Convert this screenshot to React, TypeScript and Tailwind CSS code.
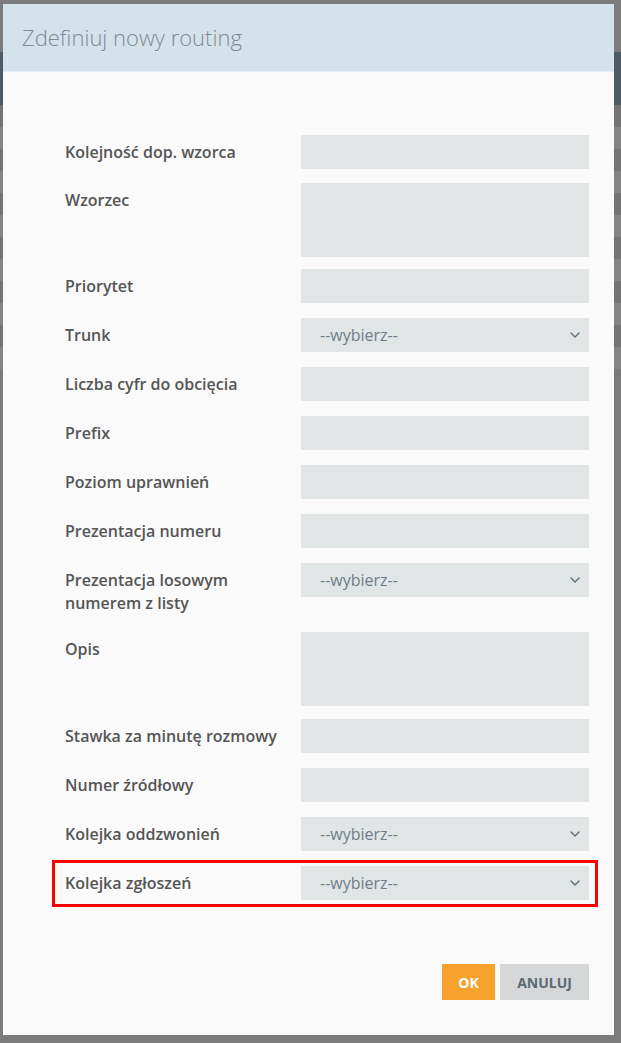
import { ChevronDown } from "lucide-react";

type Field = {
  label: string;
  kind: "input" | "textarea" | "select";
  mb: string;
};

const fields: Field[] = [
  { label: "Kolejność dop. wzorca", kind: "input", mb: "mb-[14px]" },
  { label: "Wzorzec", kind: "textarea", mb: "mb-[12px]" },
  { label: "Priorytet", kind: "input", mb: "mb-[15px]" },
  { label: "Trunk", kind: "select", mb: "mb-[15px]" },
  { label: "Liczba cyfr do obcięcia", kind: "input", mb: "mb-[15px]" },
  { label: "Prefix", kind: "input", mb: "mb-[15px]" },
  { label: "Poziom uprawnień", kind: "input", mb: "mb-[15px]" },
  { label: "Prezentacja numeru", kind: "input", mb: "mb-[15px]" },
  { label: "Prezentacja losowym numerem z listy", kind: "select", mb: "mb-[17px]" },
  { label: "Opis", kind: "textarea", mb: "mb-[13px]" },
  { label: "Stawka za minutę rozmowy", kind: "input", mb: "mb-[15px]" },
  { label: "Numer źródłowy", kind: "input", mb: "mb-[15px]" },
  { label: "Kolejka oddzwonień", kind: "select", mb: "mb-[9px]" },
];

function Control({ kind }: { kind: Field["kind"] }) {
  if (kind === "textarea") {
    return <div className="w-[288px] h-[74px] shrink-0 bg-[#e2e5e6]" />;
  }
  if (kind === "select") {
    return (
      <div className="w-[288px] h-[34px] shrink-0 bg-[#e2e5e6] flex items-center justify-between pl-[19px] pr-[6px] text-[16px] text-[#6f7e88]">
        <span>--wybierz--</span>
        <ChevronDown className="w-[16px] h-[16px] text-[#5f6e78]" strokeWidth={2} />
      </div>
    );
  }
  return <div className="w-[288px] h-[34px] shrink-0 bg-[#e2e5e6]" />;
}

function Label({ text }: { text: string }) {
  return (
    <label className="w-[236px] shrink-0 pt-[6px] pr-[6px] text-[16px] leading-[23px] font-semibold text-[#555555]">
      {text}
    </label>
  );
}

function Row({ field }: { field: Field }) {
  return (
    <div className={`flex items-start ${field.mb}`}>
      <Label text={field.label} />
      <Control kind={field.kind} />
    </div>
  );
}

export default function App() {
  return (
    <div
      className="relative h-[1043px] w-full overflow-hidden bg-[#7b7b7b]"
      style={{ fontFamily: '"Open Sans", "Liberation Sans", sans-serif' }}
    >
      {/* page behind the overlay */}
      <div className="pt-[52px]">
        <div className="h-[53px] bg-[#4b5d63]" />
        {[0, 1, 2, 3, 4, 5, 6, 7, 8, 9, 10, 11].map((i) => (
          <div key={i} className={`h-[22px] ${i % 2 === 0 ? "bg-[#747474]" : "bg-[#858585]"}`} />
        ))}
      </div>

      {/* modal */}
      <div className="absolute left-[3px] top-[4px] w-[611px] h-[1031px] bg-[#fafafa] flex flex-col">
        <div className="h-[68px] bg-[#d4e2ea] border-b border-[#e4edf2] flex items-center px-[19px]">
          <h2 className="text-[22px] font-light text-[#7d8c95]">Zdefiniuj nowy routing</h2>
        </div>

        <div className="pt-[63px] pl-[62px] pr-[25px]">
          {fields.map((f) => (
            <Row key={f.label} field={f} />
          ))}

          <div className="-ml-[13px] -mr-[9px] border-[3px] border-[#ff0000] pl-[10px] pr-[3px] pt-[3px] pb-[4px]">
            <div className="flex items-start">
              <Label text="Kolejka zgłoszeń" />
              <Control kind="select" />
            </div>
          </div>

          <div className="flex justify-end gap-[5px] mt-[57px]">
            <button className="w-[53px] h-[36px] bg-[#f6a22c] text-white text-[14px] font-bold">OK</button>
            <button className="w-[89px] h-[36px] bg-[#d5d7d8] text-[#5b6a73] text-[14px] font-bold">ANULUJ</button>
          </div>
        </div>
      </div>
    </div>
  );
}
